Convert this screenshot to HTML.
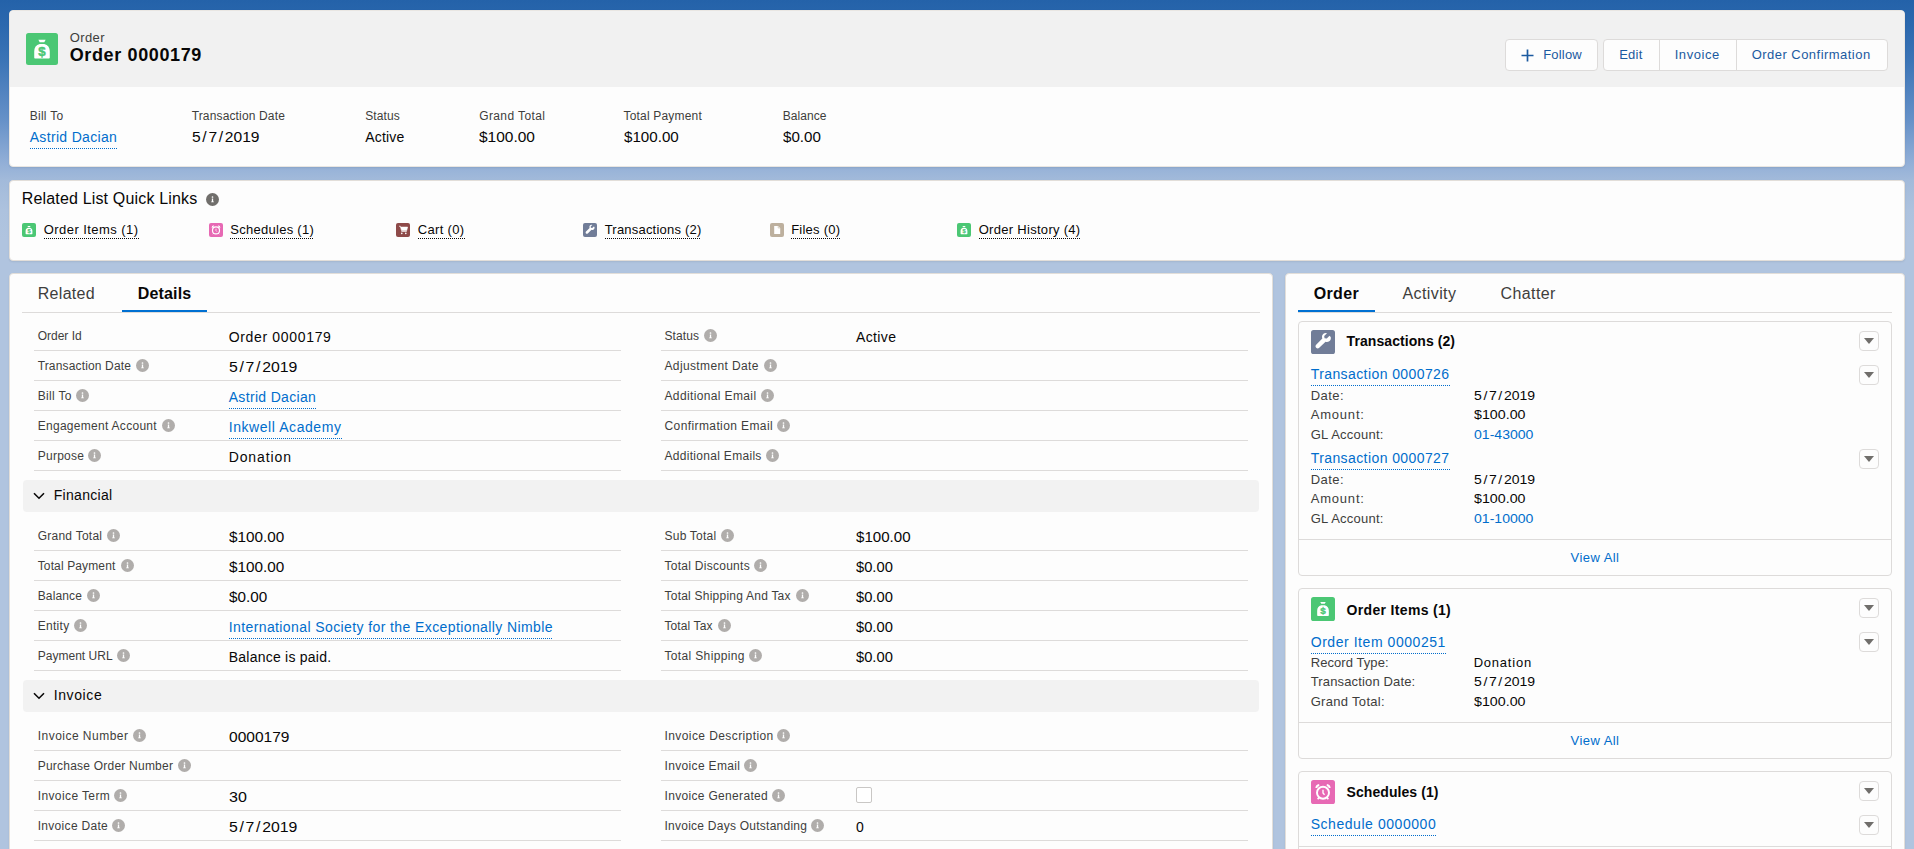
<!DOCTYPE html><html><head><meta charset="utf-8"><style>
*{box-sizing:border-box;margin:0;padding:0}
html,body{width:1914px;height:849px;overflow:hidden}
body{position:relative;background:#b0c4df linear-gradient(to bottom,#2462a9 0px,#2b68ae 25px,#3b74b6 60px,#6691c8 120px,#92afd7 163px,#a2bada 180px,#adc2de 210px,#b0c4df 240px) no-repeat;background-size:1914px 260px;font-family:"Liberation Sans", sans-serif;}
.t{position:absolute;white-space:nowrap;line-height:20px}
.r{position:absolute}
.sl{margin:0 1.5px}
.card{position:absolute;background:#fdfdfd;border:1px solid #e2ded9;border-radius:4px;box-shadow:0 1px 2px rgba(0,0,0,.08);}
.lk{padding-bottom:2px;background-image:linear-gradient(to right,currentColor 50%,transparent 50%);background-size:2px 1px;background-repeat:repeat-x;background-position:0 100%}
.lkq{background-image:linear-gradient(to right,#080707 50%,transparent 50%);background-size:2px 1px;background-repeat:repeat-x;background-position:0 18px}
.btn{position:absolute;border:1px solid #dddbda;border-radius:4px;background:#fdfdfd;}
.dd{position:absolute;width:20px;height:20px;border:1px solid #dddbda;border-radius:4px;background:#fdfdfd}
.dd:after{content:"";position:absolute;left:4px;top:6px;border-left:5px solid transparent;border-right:5px solid transparent;border-top:6px solid #706e6b}
</style></head><body>
<div class="card" style="left:9px;top:10px;width:1896px;height:157px;overflow:hidden;border-color:#e9e6e2"><div style="position:absolute;left:0;top:0;width:100%;height:76px;background:#f1f1f1"></div></div>
<svg class="r" style="left:26px;top:33px" width="32" height="32" viewBox="0 0 14 14"><rect width="14" height="14" rx="1.1" fill="#4bc774"/>
<path d="M5.4 2.9h3.2l-0.6 1.1H6z M6 4.85h2C9.6 5.3 10.4 6.4 10.4 8V10.7c0 .25-.2 .45-.45 .45H4.05c-.25 0-.45-.2-.45-.45V8C3.6 6.4 4.4 5.3 6 4.85z" fill="#fff"/><text x="7" y="10.15" font-family="Liberation Sans" font-weight="700" font-size="5.8" fill="#4bc774" stroke="#4bc774" stroke-width="0.2" text-anchor="middle">$</text></svg>
<div id="t1" class="t " style="left:69.70px;top:27.5px;font-size:13px;color:#3e3e3c;letter-spacing:0.400px;">Order</div>
<div id="t2" class="t " style="left:69.70px;top:45.0px;font-size:18px;color:#080707;font-weight:700;letter-spacing:0.633px;">Order 0000179</div>
<div class="btn" style="left:1505px;top:39px;width:93px;height:32px;"></div>
<svg class="r" style="left:1521px;top:49px" width="13" height="13" viewBox="0 0 13 13"><path d="M6.5 0.5v12M0.5 6.5h12" stroke="#1b5aa0" stroke-width="1.7"/></svg>
<div id="t3" class="t " style="left:1543.20px;top:44.5px;font-size:13px;color:#1b5aa0;letter-spacing:0.200px;">Follow</div>
<div class="btn" style="left:1603px;top:39px;width:285px;height:32px;"></div>
<div class="r" style="left:1659px;top:40px;width:1px;height:30px;background:#dddbda"></div>
<div class="r" style="left:1736px;top:40px;width:1px;height:30px;background:#dddbda"></div>
<div id="t4" class="t " style="left:1619.20px;top:44.5px;font-size:13px;color:#1b5aa0;letter-spacing:0.233px;">Edit</div>
<div id="t5" class="t " style="left:1674.70px;top:44.5px;font-size:13px;color:#1b5aa0;letter-spacing:0.550px;">Invoice</div>
<div id="t6" class="t " style="left:1751.70px;top:44.5px;font-size:13px;color:#1b5aa0;letter-spacing:0.465px;">Order Confirmation</div>
<div id="t7" class="t " style="left:29.70px;top:106.0px;font-size:12px;color:#3e3e3c;letter-spacing:0.283px;">Bill To</div>
<div id="t8" class="t lk" style="left:29.70px;top:127.0px;font-size:14px;color:#006dcc;letter-spacing:0.325px;">Astrid Dacian</div>
<div id="t9" class="t " style="left:191.70px;top:106.0px;font-size:12px;color:#3e3e3c;letter-spacing:0.147px;">Transaction Date</div>
<div id="t10" class="t " style="left:191.70px;top:127.0px;font-size:14px;color:#080707;transform:scaleX(1.1153);transform-origin:0 0;">5<span class="sl">/</span>7<span class="sl">/</span>2019</div>
<div id="t11" class="t " style="left:365.20px;top:106.0px;font-size:12px;color:#3e3e3c;letter-spacing:0.120px;">Status</div>
<div id="t12" class="t " style="left:365.20px;top:127.0px;font-size:14px;color:#080707;letter-spacing:0.200px;">Active</div>
<div id="t13" class="t " style="left:479.20px;top:106.0px;font-size:12px;color:#3e3e3c;letter-spacing:0.390px;">Grand Total</div>
<div id="t14" class="t " style="left:479.20px;top:127.0px;font-size:14px;color:#080707;transform:scaleX(1.1061);transform-origin:0 0;">$100.00</div>
<div id="t15" class="t " style="left:623.50px;top:106.0px;font-size:12px;color:#3e3e3c;letter-spacing:0.183px;">Total Payment</div>
<div id="t16" class="t " style="left:623.50px;top:127.0px;font-size:14px;color:#080707;transform:scaleX(1.0820);transform-origin:0 0;">$100.00</div>
<div id="t17" class="t " style="left:782.70px;top:106.0px;font-size:12px;color:#3e3e3c;letter-spacing:0.067px;">Balance</div>
<div id="t18" class="t " style="left:782.70px;top:127.0px;font-size:14px;color:#080707;transform:scaleX(1.0824);transform-origin:0 0;">$0.00</div>
<div class="card" style="left:9px;top:180px;width:1896px;height:81px;"></div>
<div id="t19" class="t " style="left:21.70px;top:188.5px;font-size:16px;color:#080707;letter-spacing:0.170px;">Related List Quick Links</div>
<svg class="r" style="left:206px;top:193px" width="13" height="13" viewBox="0 0 13 13"><circle cx="6.5" cy="6.5" r="6.5" fill="#706e6b"/><circle cx="6.5" cy="4" r="0.85" fill="#fff"/><path d="M5.85 5.4h1.3v3.1h0.7v0.75H5.15v-0.75h0.7z" fill="#fff"/></svg>
<svg class="r" style="left:22px;top:223px" width="14" height="14" viewBox="0 0 14 14"><rect width="14" height="14" rx="2" fill="#4bc774"/>
<path d="M5.4 2.9h3.2l-0.6 1.1H6z M6 4.85h2C9.6 5.3 10.4 6.4 10.4 8V10.7c0 .25-.2 .45-.45 .45H4.05c-.25 0-.45-.2-.45-.45V8C3.6 6.4 4.4 5.3 6 4.85z" fill="#fff"/><text x="7" y="10.15" font-family="Liberation Sans" font-weight="700" font-size="5.8" fill="#4bc774" stroke="#4bc774" stroke-width="0.2" text-anchor="middle">$</text>
</svg>
<div id="t20" class="t lkq" style="left:43.70px;top:219.5px;font-size:13px;color:#080707;letter-spacing:0.450px;">Order Items (1)</div>
<svg class="r" style="left:209px;top:223px" width="14" height="14" viewBox="0 0 14 14"><rect width="14" height="14" rx="2" fill="#e769b4"/>
<circle cx="7" cy="7.4" r="3.5" fill="none" stroke="#fff" stroke-width="1.15"/><path d="M7 5.7v1.9l0.9 1" stroke="#fff" stroke-width="0.8" fill="none"/><path d="M3.1 4.7Q3.2 3.1 4.8 2.9M10.9 4.7Q10.8 3.1 9.2 2.9" stroke="#fff" stroke-width="1.1" fill="none"/><path d="M4.7 10.2L3.9 11.2M9.3 10.2L10.1 11.2" stroke="#fff" stroke-width="1"/>
</svg>
<div id="t21" class="t lkq" style="left:230.20px;top:219.5px;font-size:13px;color:#080707;letter-spacing:0.283px;">Schedules (1)</div>
<svg class="r" style="left:396px;top:223px" width="14" height="14" viewBox="0 0 14 14"><rect width="14" height="14" rx="2" fill="#8e4a49"/>
<path d="M3 3.2h1.3l1.2 4.4h5.2l0.9-3.5H4.6" fill="#fff" stroke="#fff" stroke-width="0.6"/><path d="M5.4 8.5h5.4" stroke="#fff" stroke-width="0.7"/><circle cx="5.8" cy="10.4" r="0.8" fill="#fff"/><circle cx="9.8" cy="10.4" r="0.8" fill="#fff"/>
</svg>
<div id="t22" class="t lkq" style="left:417.70px;top:219.5px;font-size:13px;color:#080707;letter-spacing:0.343px;">Cart (0)</div>
<svg class="r" style="left:583px;top:223px" width="14" height="14" viewBox="0 0 14 14"><rect width="14" height="14" rx="2" fill="#717d98"/>
<path d="M10.8 3.4l-1.6 1.6-1.3-0.2-0.2-1.3 1.6-1.6c-1.4-0.4-2.9 0.6-2.9 2.1 0 0.3 0.1 0.6 0.2 0.9L3 8.6c-0.5 0.5-0.5 1.3 0 1.8s1.3 0.5 1.8 0l3.7-3.6c0.3 0.1 0.6 0.2 0.9 0.2 1.5 0 2.5-1.5 2.1-2.9z" fill="#fff"/>
</svg>
<div id="t23" class="t lkq" style="left:604.70px;top:219.5px;font-size:13px;color:#080707;letter-spacing:0.207px;">Transactions (2)</div>
<svg class="r" style="left:770px;top:223px" width="14" height="14" viewBox="0 0 14 14"><rect width="14" height="14" rx="2" fill="#bdb09e"/>
<path d="M4.2 3h4l2 2v6h-6z" fill="#fff"/><path d="M8.2 3v2h2" fill="none" stroke="#baac93" stroke-width="0.5"/>
</svg>
<div id="t24" class="t lkq" style="left:791.20px;top:219.5px;font-size:13px;color:#080707;letter-spacing:0.237px;">Files (0)</div>
<svg class="r" style="left:957px;top:223px" width="14" height="14" viewBox="0 0 14 14"><rect width="14" height="14" rx="2" fill="#4bc774"/>
<path d="M5.4 2.9h3.2l-0.6 1.1H6z M6 4.85h2C9.6 5.3 10.4 6.4 10.4 8V10.7c0 .25-.2 .45-.45 .45H4.05c-.25 0-.45-.2-.45-.45V8C3.6 6.4 4.4 5.3 6 4.85z" fill="#fff"/><text x="7" y="10.15" font-family="Liberation Sans" font-weight="700" font-size="5.8" fill="#4bc774" stroke="#4bc774" stroke-width="0.2" text-anchor="middle">$</text>
</svg>
<div id="t25" class="t lkq" style="left:978.70px;top:219.5px;font-size:13px;color:#080707;letter-spacing:0.294px;">Order History (4)</div>
<div class="card" style="left:9px;top:273px;width:1264px;height:600px;"></div>
<div id="t26" class="t " style="left:37.70px;top:283.5px;font-size:16px;color:#3e3e3c;letter-spacing:0.317px;">Related</div>
<div id="t27" class="t " style="left:137.70px;top:283.5px;font-size:16px;color:#080707;font-weight:700;letter-spacing:0.167px;">Details</div>
<div class="r" style="left:22px;top:312px;width:1238px;height:1px;background:#dddbda"></div>
<div class="r" style="left:122px;top:310px;width:85px;height:2px;background:#0070d2"></div>
<div id="t28" class="t " style="left:37.70px;top:326.0px;font-size:12px;color:#3e3e3c;">Order Id</div>
<div id="t29" class="t " style="left:228.70px;top:327.0px;font-size:14px;color:#080707;letter-spacing:0.667px;">Order 0000179</div>
<div class="r" style="left:34px;top:350px;width:587px;height:1px;background:#dddbda"></div>
<div id="t30" class="t " style="left:664.50px;top:326.0px;font-size:12px;color:#3e3e3c;letter-spacing:0.080px;">Status</div>
<svg class="r" style="left:703.9px;top:329px" width="13" height="13" viewBox="0 0 13 13"><circle cx="6.5" cy="6.5" r="6.5" fill="#b0adab"/><circle cx="6.5" cy="4" r="0.85" fill="#fff"/><path d="M5.85 5.4h1.3v3.1h0.7v0.75H5.15v-0.75h0.7z" fill="#fff"/></svg>
<div id="t31" class="t " style="left:855.90px;top:327.0px;font-size:14px;color:#080707;letter-spacing:0.400px;">Active</div>
<div class="r" style="left:661px;top:350px;width:587px;height:1px;background:#dddbda"></div>
<div id="t32" class="t " style="left:37.70px;top:356.0px;font-size:12px;color:#3e3e3c;letter-spacing:0.153px;">Transaction Date</div>
<svg class="r" style="left:136px;top:359px" width="13" height="13" viewBox="0 0 13 13"><circle cx="6.5" cy="6.5" r="6.5" fill="#b0adab"/><circle cx="6.5" cy="4" r="0.85" fill="#fff"/><path d="M5.85 5.4h1.3v3.1h0.7v0.75H5.15v-0.75h0.7z" fill="#fff"/></svg>
<div id="t33" class="t " style="left:228.70px;top:357.0px;font-size:14px;color:#080707;transform:scaleX(1.1305);transform-origin:0 0;">5<span class="sl">/</span>7<span class="sl">/</span>2019</div>
<div class="r" style="left:34px;top:380px;width:587px;height:1px;background:#dddbda"></div>
<div id="t34" class="t " style="left:664.50px;top:356.0px;font-size:12px;color:#3e3e3c;letter-spacing:0.371px;">Adjustment Date</div>
<svg class="r" style="left:763.7px;top:359px" width="13" height="13" viewBox="0 0 13 13"><circle cx="6.5" cy="6.5" r="6.5" fill="#b0adab"/><circle cx="6.5" cy="4" r="0.85" fill="#fff"/><path d="M5.85 5.4h1.3v3.1h0.7v0.75H5.15v-0.75h0.7z" fill="#fff"/></svg>
<div class="r" style="left:661px;top:380px;width:587px;height:1px;background:#dddbda"></div>
<div id="t35" class="t " style="left:37.70px;top:386.0px;font-size:12px;color:#3e3e3c;letter-spacing:0.317px;">Bill To</div>
<svg class="r" style="left:75.6px;top:389px" width="13" height="13" viewBox="0 0 13 13"><circle cx="6.5" cy="6.5" r="6.5" fill="#b0adab"/><circle cx="6.5" cy="4" r="0.85" fill="#fff"/><path d="M5.85 5.4h1.3v3.1h0.7v0.75H5.15v-0.75h0.7z" fill="#fff"/></svg>
<div id="t36" class="t lk" style="left:228.70px;top:387.0px;font-size:14px;color:#006dcc;letter-spacing:0.325px;">Astrid Dacian</div>
<div class="r" style="left:34px;top:410px;width:587px;height:1px;background:#dddbda"></div>
<div id="t37" class="t " style="left:664.50px;top:386.0px;font-size:12px;color:#3e3e3c;letter-spacing:0.367px;">Additional Email</div>
<svg class="r" style="left:761px;top:389px" width="13" height="13" viewBox="0 0 13 13"><circle cx="6.5" cy="6.5" r="6.5" fill="#b0adab"/><circle cx="6.5" cy="4" r="0.85" fill="#fff"/><path d="M5.85 5.4h1.3v3.1h0.7v0.75H5.15v-0.75h0.7z" fill="#fff"/></svg>
<div class="r" style="left:661px;top:410px;width:587px;height:1px;background:#dddbda"></div>
<div id="t38" class="t " style="left:37.70px;top:416.0px;font-size:12px;color:#3e3e3c;letter-spacing:0.288px;">Engagement Account</div>
<svg class="r" style="left:161.6px;top:419px" width="13" height="13" viewBox="0 0 13 13"><circle cx="6.5" cy="6.5" r="6.5" fill="#b0adab"/><circle cx="6.5" cy="4" r="0.85" fill="#fff"/><path d="M5.85 5.4h1.3v3.1h0.7v0.75H5.15v-0.75h0.7z" fill="#fff"/></svg>
<div id="t39" class="t lk" style="left:228.70px;top:417.0px;font-size:14px;color:#006dcc;letter-spacing:0.571px;">Inkwell Academy</div>
<div class="r" style="left:34px;top:440px;width:587px;height:1px;background:#dddbda"></div>
<div id="t40" class="t " style="left:664.50px;top:416.0px;font-size:12px;color:#3e3e3c;letter-spacing:0.400px;">Confirmation Email</div>
<svg class="r" style="left:777.3px;top:419px" width="13" height="13" viewBox="0 0 13 13"><circle cx="6.5" cy="6.5" r="6.5" fill="#b0adab"/><circle cx="6.5" cy="4" r="0.85" fill="#fff"/><path d="M5.85 5.4h1.3v3.1h0.7v0.75H5.15v-0.75h0.7z" fill="#fff"/></svg>
<div class="r" style="left:661px;top:440px;width:587px;height:1px;background:#dddbda"></div>
<div id="t41" class="t " style="left:37.70px;top:446.0px;font-size:12px;color:#3e3e3c;letter-spacing:0.267px;">Purpose</div>
<svg class="r" style="left:88.3px;top:449px" width="13" height="13" viewBox="0 0 13 13"><circle cx="6.5" cy="6.5" r="6.5" fill="#b0adab"/><circle cx="6.5" cy="4" r="0.85" fill="#fff"/><path d="M5.85 5.4h1.3v3.1h0.7v0.75H5.15v-0.75h0.7z" fill="#fff"/></svg>
<div id="t42" class="t " style="left:228.70px;top:447.0px;font-size:14px;color:#080707;letter-spacing:0.886px;">Donation</div>
<div class="r" style="left:34px;top:470px;width:587px;height:1px;background:#dddbda"></div>
<div id="t43" class="t " style="left:664.50px;top:446.0px;font-size:12px;color:#3e3e3c;letter-spacing:0.300px;">Additional Emails</div>
<svg class="r" style="left:766.3px;top:449px" width="13" height="13" viewBox="0 0 13 13"><circle cx="6.5" cy="6.5" r="6.5" fill="#b0adab"/><circle cx="6.5" cy="4" r="0.85" fill="#fff"/><path d="M5.85 5.4h1.3v3.1h0.7v0.75H5.15v-0.75h0.7z" fill="#fff"/></svg>
<div class="r" style="left:661px;top:470px;width:587px;height:1px;background:#dddbda"></div>
<div class="r" style="left:23px;top:480px;width:1236px;height:32px;background:#f2f2f2;border-radius:4px"></div>
<svg class="r" style="left:33px;top:492px" width="12" height="8" viewBox="0 0 12 8"><path d="M1 1.2l5 5 5-5" stroke="#080707" stroke-width="1.6" fill="none"/></svg>
<div id="t44" class="t " style="left:53.70px;top:485.0px;font-size:14px;color:#080707;letter-spacing:0.312px;">Financial</div>
<div id="t45" class="t " style="left:37.70px;top:526.0px;font-size:12px;color:#3e3e3c;letter-spacing:0.250px;">Grand Total</div>
<svg class="r" style="left:107.2px;top:529px" width="13" height="13" viewBox="0 0 13 13"><circle cx="6.5" cy="6.5" r="6.5" fill="#b0adab"/><circle cx="6.5" cy="4" r="0.85" fill="#fff"/><path d="M5.85 5.4h1.3v3.1h0.7v0.75H5.15v-0.75h0.7z" fill="#fff"/></svg>
<div id="t46" class="t " style="left:228.70px;top:527.0px;font-size:14px;color:#080707;transform:scaleX(1.0940);transform-origin:0 0;">$100.00</div>
<div class="r" style="left:34px;top:550px;width:587px;height:1px;background:#dddbda"></div>
<div id="t47" class="t " style="left:664.50px;top:526.0px;font-size:12px;color:#3e3e3c;letter-spacing:0.225px;">Sub Total</div>
<svg class="r" style="left:721.3px;top:529px" width="13" height="13" viewBox="0 0 13 13"><circle cx="6.5" cy="6.5" r="6.5" fill="#b0adab"/><circle cx="6.5" cy="4" r="0.85" fill="#fff"/><path d="M5.85 5.4h1.3v3.1h0.7v0.75H5.15v-0.75h0.7z" fill="#fff"/></svg>
<div id="t48" class="t " style="left:855.90px;top:527.0px;font-size:14px;color:#080707;transform:scaleX(1.0780);transform-origin:0 0;">$100.00</div>
<div class="r" style="left:661px;top:550px;width:587px;height:1px;background:#dddbda"></div>
<div id="t49" class="t " style="left:37.70px;top:556.0px;font-size:12px;color:#3e3e3c;letter-spacing:0.133px;">Total Payment</div>
<svg class="r" style="left:121.3px;top:559px" width="13" height="13" viewBox="0 0 13 13"><circle cx="6.5" cy="6.5" r="6.5" fill="#b0adab"/><circle cx="6.5" cy="4" r="0.85" fill="#fff"/><path d="M5.85 5.4h1.3v3.1h0.7v0.75H5.15v-0.75h0.7z" fill="#fff"/></svg>
<div id="t50" class="t " style="left:228.70px;top:557.0px;font-size:14px;color:#080707;transform:scaleX(1.0940);transform-origin:0 0;">$100.00</div>
<div class="r" style="left:34px;top:580px;width:587px;height:1px;background:#dddbda"></div>
<div id="t51" class="t " style="left:664.50px;top:556.0px;font-size:12px;color:#3e3e3c;letter-spacing:0.271px;">Total Discounts</div>
<svg class="r" style="left:754.3px;top:559px" width="13" height="13" viewBox="0 0 13 13"><circle cx="6.5" cy="6.5" r="6.5" fill="#b0adab"/><circle cx="6.5" cy="4" r="0.85" fill="#fff"/><path d="M5.85 5.4h1.3v3.1h0.7v0.75H5.15v-0.75h0.7z" fill="#fff"/></svg>
<div id="t52" class="t " style="left:855.90px;top:557.0px;font-size:14px;color:#080707;transform:scaleX(1.0514);transform-origin:0 0;">$0.00</div>
<div class="r" style="left:661px;top:580px;width:587px;height:1px;background:#dddbda"></div>
<div id="t53" class="t " style="left:37.70px;top:586.0px;font-size:12px;color:#3e3e3c;letter-spacing:0.133px;">Balance</div>
<svg class="r" style="left:86.5px;top:589px" width="13" height="13" viewBox="0 0 13 13"><circle cx="6.5" cy="6.5" r="6.5" fill="#b0adab"/><circle cx="6.5" cy="4" r="0.85" fill="#fff"/><path d="M5.85 5.4h1.3v3.1h0.7v0.75H5.15v-0.75h0.7z" fill="#fff"/></svg>
<div id="t54" class="t " style="left:228.70px;top:587.0px;font-size:14px;color:#080707;transform:scaleX(1.0912);transform-origin:0 0;">$0.00</div>
<div class="r" style="left:34px;top:610px;width:587px;height:1px;background:#dddbda"></div>
<div id="t55" class="t " style="left:664.50px;top:586.0px;font-size:12px;color:#3e3e3c;letter-spacing:0.229px;">Total Shipping And Tax</div>
<svg class="r" style="left:796.3px;top:589px" width="13" height="13" viewBox="0 0 13 13"><circle cx="6.5" cy="6.5" r="6.5" fill="#b0adab"/><circle cx="6.5" cy="4" r="0.85" fill="#fff"/><path d="M5.85 5.4h1.3v3.1h0.7v0.75H5.15v-0.75h0.7z" fill="#fff"/></svg>
<div id="t56" class="t " style="left:855.90px;top:587.0px;font-size:14px;color:#080707;transform:scaleX(1.0514);transform-origin:0 0;">$0.00</div>
<div class="r" style="left:661px;top:610px;width:587px;height:1px;background:#dddbda"></div>
<div id="t57" class="t " style="left:37.70px;top:616.0px;font-size:12px;color:#3e3e3c;letter-spacing:0.300px;">Entity</div>
<svg class="r" style="left:74.2px;top:619px" width="13" height="13" viewBox="0 0 13 13"><circle cx="6.5" cy="6.5" r="6.5" fill="#b0adab"/><circle cx="6.5" cy="4" r="0.85" fill="#fff"/><path d="M5.85 5.4h1.3v3.1h0.7v0.75H5.15v-0.75h0.7z" fill="#fff"/></svg>
<div id="t58" class="t lk" style="left:228.70px;top:617.0px;font-size:14px;color:#006dcc;letter-spacing:0.400px;">International Society for the Exceptionally Nimble</div>
<div class="r" style="left:34px;top:640px;width:587px;height:1px;background:#dddbda"></div>
<div id="t59" class="t " style="left:664.50px;top:616.0px;font-size:12px;color:#3e3e3c;letter-spacing:0.100px;">Total Tax</div>
<svg class="r" style="left:718.3px;top:619px" width="13" height="13" viewBox="0 0 13 13"><circle cx="6.5" cy="6.5" r="6.5" fill="#b0adab"/><circle cx="6.5" cy="4" r="0.85" fill="#fff"/><path d="M5.85 5.4h1.3v3.1h0.7v0.75H5.15v-0.75h0.7z" fill="#fff"/></svg>
<div id="t60" class="t " style="left:855.90px;top:617.0px;font-size:14px;color:#080707;transform:scaleX(1.0514);transform-origin:0 0;">$0.00</div>
<div class="r" style="left:661px;top:640px;width:587px;height:1px;background:#dddbda"></div>
<div id="t61" class="t " style="left:37.70px;top:646.0px;font-size:12px;color:#3e3e3c;letter-spacing:0.020px;">Payment URL</div>
<svg class="r" style="left:116.9px;top:649px" width="13" height="13" viewBox="0 0 13 13"><circle cx="6.5" cy="6.5" r="6.5" fill="#b0adab"/><circle cx="6.5" cy="4" r="0.85" fill="#fff"/><path d="M5.85 5.4h1.3v3.1h0.7v0.75H5.15v-0.75h0.7z" fill="#fff"/></svg>
<div id="t62" class="t " style="left:228.70px;top:647.0px;font-size:14px;color:#080707;letter-spacing:0.240px;">Balance is paid.</div>
<div class="r" style="left:34px;top:670px;width:587px;height:1px;background:#dddbda"></div>
<div id="t63" class="t " style="left:664.50px;top:646.0px;font-size:12px;color:#3e3e3c;letter-spacing:0.346px;">Total Shipping</div>
<svg class="r" style="left:749px;top:649px" width="13" height="13" viewBox="0 0 13 13"><circle cx="6.5" cy="6.5" r="6.5" fill="#b0adab"/><circle cx="6.5" cy="4" r="0.85" fill="#fff"/><path d="M5.85 5.4h1.3v3.1h0.7v0.75H5.15v-0.75h0.7z" fill="#fff"/></svg>
<div id="t64" class="t " style="left:855.90px;top:647.0px;font-size:14px;color:#080707;transform:scaleX(1.0514);transform-origin:0 0;">$0.00</div>
<div class="r" style="left:661px;top:670px;width:587px;height:1px;background:#dddbda"></div>
<div class="r" style="left:23px;top:680px;width:1236px;height:32px;background:#f2f2f2;border-radius:4px"></div>
<svg class="r" style="left:33px;top:692px" width="12" height="8" viewBox="0 0 12 8"><path d="M1 1.2l5 5 5-5" stroke="#080707" stroke-width="1.6" fill="none"/></svg>
<div id="t65" class="t " style="left:53.70px;top:685.0px;font-size:14px;color:#080707;letter-spacing:0.617px;">Invoice</div>
<div id="t66" class="t " style="left:37.70px;top:726.0px;font-size:12px;color:#3e3e3c;letter-spacing:0.477px;">Invoice Number</div>
<svg class="r" style="left:132.9px;top:729px" width="13" height="13" viewBox="0 0 13 13"><circle cx="6.5" cy="6.5" r="6.5" fill="#b0adab"/><circle cx="6.5" cy="4" r="0.85" fill="#fff"/><path d="M5.85 5.4h1.3v3.1h0.7v0.75H5.15v-0.75h0.7z" fill="#fff"/></svg>
<div id="t67" class="t " style="left:228.70px;top:727.0px;font-size:14px;color:#080707;transform:scaleX(1.1093);transform-origin:0 0;">0000179</div>
<div class="r" style="left:34px;top:750px;width:587px;height:1px;background:#dddbda"></div>
<div id="t68" class="t " style="left:664.50px;top:726.0px;font-size:12px;color:#3e3e3c;letter-spacing:0.411px;">Invoice Description</div>
<svg class="r" style="left:776.9px;top:729px" width="13" height="13" viewBox="0 0 13 13"><circle cx="6.5" cy="6.5" r="6.5" fill="#b0adab"/><circle cx="6.5" cy="4" r="0.85" fill="#fff"/><path d="M5.85 5.4h1.3v3.1h0.7v0.75H5.15v-0.75h0.7z" fill="#fff"/></svg>
<div class="r" style="left:661px;top:750px;width:587px;height:1px;background:#dddbda"></div>
<div id="t69" class="t " style="left:37.70px;top:756.0px;font-size:12px;color:#3e3e3c;letter-spacing:0.225px;">Purchase Order Number</div>
<svg class="r" style="left:178.2px;top:759px" width="13" height="13" viewBox="0 0 13 13"><circle cx="6.5" cy="6.5" r="6.5" fill="#b0adab"/><circle cx="6.5" cy="4" r="0.85" fill="#fff"/><path d="M5.85 5.4h1.3v3.1h0.7v0.75H5.15v-0.75h0.7z" fill="#fff"/></svg>
<div class="r" style="left:34px;top:780px;width:587px;height:1px;background:#dddbda"></div>
<div id="t70" class="t " style="left:664.50px;top:756.0px;font-size:12px;color:#3e3e3c;letter-spacing:0.342px;">Invoice Email</div>
<svg class="r" style="left:743.6px;top:759px" width="13" height="13" viewBox="0 0 13 13"><circle cx="6.5" cy="6.5" r="6.5" fill="#b0adab"/><circle cx="6.5" cy="4" r="0.85" fill="#fff"/><path d="M5.85 5.4h1.3v3.1h0.7v0.75H5.15v-0.75h0.7z" fill="#fff"/></svg>
<div class="r" style="left:661px;top:780px;width:587px;height:1px;background:#dddbda"></div>
<div id="t71" class="t " style="left:37.70px;top:786.0px;font-size:12px;color:#3e3e3c;letter-spacing:0.391px;">Invoice Term</div>
<svg class="r" style="left:114px;top:789px" width="13" height="13" viewBox="0 0 13 13"><circle cx="6.5" cy="6.5" r="6.5" fill="#b0adab"/><circle cx="6.5" cy="4" r="0.85" fill="#fff"/><path d="M5.85 5.4h1.3v3.1h0.7v0.75H5.15v-0.75h0.7z" fill="#fff"/></svg>
<div id="t72" class="t " style="left:228.70px;top:787.0px;font-size:14px;color:#080707;transform:scaleX(1.1467);transform-origin:0 0;">30</div>
<div class="r" style="left:34px;top:810px;width:587px;height:1px;background:#dddbda"></div>
<div id="t73" class="t " style="left:664.50px;top:786.0px;font-size:12px;color:#3e3e3c;letter-spacing:0.325px;">Invoice Generated</div>
<svg class="r" style="left:771.7px;top:789px" width="13" height="13" viewBox="0 0 13 13"><circle cx="6.5" cy="6.5" r="6.5" fill="#b0adab"/><circle cx="6.5" cy="4" r="0.85" fill="#fff"/><path d="M5.85 5.4h1.3v3.1h0.7v0.75H5.15v-0.75h0.7z" fill="#fff"/></svg>
<div class="r" style="left:856px;top:787px;width:16px;height:16px;border:1px solid #c9c7c5;border-radius:2px;background:#fff"></div>
<div class="r" style="left:661px;top:810px;width:587px;height:1px;background:#dddbda"></div>
<div id="t74" class="t " style="left:37.70px;top:816.0px;font-size:12px;color:#3e3e3c;letter-spacing:0.309px;">Invoice Date</div>
<svg class="r" style="left:112.1px;top:819px" width="13" height="13" viewBox="0 0 13 13"><circle cx="6.5" cy="6.5" r="6.5" fill="#b0adab"/><circle cx="6.5" cy="4" r="0.85" fill="#fff"/><path d="M5.85 5.4h1.3v3.1h0.7v0.75H5.15v-0.75h0.7z" fill="#fff"/></svg>
<div id="t75" class="t " style="left:228.70px;top:817.0px;font-size:14px;color:#080707;transform:scaleX(1.1305);transform-origin:0 0;">5<span class="sl">/</span>7<span class="sl">/</span>2019</div>
<div class="r" style="left:34px;top:840px;width:587px;height:1px;background:#dddbda"></div>
<div id="t76" class="t " style="left:664.50px;top:816.0px;font-size:12px;color:#3e3e3c;letter-spacing:0.248px;">Invoice Days Outstanding</div>
<svg class="r" style="left:811.2px;top:819px" width="13" height="13" viewBox="0 0 13 13"><circle cx="6.5" cy="6.5" r="6.5" fill="#b0adab"/><circle cx="6.5" cy="4" r="0.85" fill="#fff"/><path d="M5.85 5.4h1.3v3.1h0.7v0.75H5.15v-0.75h0.7z" fill="#fff"/></svg>
<div id="t77" class="t " style="left:855.90px;top:817.0px;font-size:14px;color:#080707;">0</div>
<div class="r" style="left:661px;top:840px;width:587px;height:1px;background:#dddbda"></div>
<div class="card" style="left:1285px;top:273px;width:620px;height:600px;"></div>
<div id="t78" class="t " style="left:1313.70px;top:283.5px;font-size:16px;color:#080707;font-weight:700;letter-spacing:0.350px;">Order</div>
<div id="t79" class="t " style="left:1402.40px;top:283.5px;font-size:16px;color:#3e3e3c;letter-spacing:0.414px;">Activity</div>
<div id="t80" class="t " style="left:1500.50px;top:283.5px;font-size:16px;color:#3e3e3c;letter-spacing:0.400px;">Chatter</div>
<div class="r" style="left:1298px;top:312px;width:594px;height:1px;background:#dddbda"></div>
<div class="r" style="left:1298px;top:310px;width:77px;height:2px;background:#0070d2"></div>
<div class="r" style="left:1298px;top:321px;width:594px;height:255px;border:1px solid #dddbda;border-radius:4px"></div>
<svg class="r" style="left:1311px;top:330px" width="24" height="24" viewBox="0 0 14 14"><rect width="14" height="14" rx="1.5" fill="#717d98"/>
<path d="M10.8 3.4l-1.6 1.6-1.3-0.2-0.2-1.3 1.6-1.6c-1.4-0.4-2.9 0.6-2.9 2.1 0 0.3 0.1 0.6 0.2 0.9L3 8.6c-0.5 0.5-0.5 1.3 0 1.8s1.3 0.5 1.8 0l3.7-3.6c0.3 0.1 0.6 0.2 0.9 0.2 1.5 0 2.5-1.5 2.1-2.9z" fill="#fff"/>
</svg>
<div id="t81" class="t " style="left:1346.60px;top:331.0px;font-size:14px;color:#080707;font-weight:700;letter-spacing:0.067px;">Transactions (2)</div>
<div class="dd" style="left:1859px;top:331px"></div>
<div id="t82" class="t lk" style="left:1310.70px;top:364.0px;font-size:14px;color:#006dcc;letter-spacing:0.411px;">Transaction 0000726</div>
<div class="dd" style="left:1859px;top:365px"></div>
<div id="t83" class="t " style="left:1310.70px;top:385.5px;font-size:13px;color:#3e3e3c;letter-spacing:0.450px;">Date:</div>
<div id="t84" class="t " style="left:1473.70px;top:385.5px;font-size:13px;color:#080707;transform:scaleX(1.0786);transform-origin:0 0;">5<span class="sl">/</span>7<span class="sl">/</span>2019</div>
<div id="t85" class="t " style="left:1310.70px;top:405.0px;font-size:13px;color:#3e3e3c;letter-spacing:0.800px;">Amount:</div>
<div id="t86" class="t " style="left:1473.70px;top:405.0px;font-size:13px;color:#080707;transform:scaleX(1.0957);transform-origin:0 0;">$100.00</div>
<div id="t87" class="t " style="left:1310.70px;top:424.5px;font-size:13px;color:#3e3e3c;letter-spacing:0.240px;">GL Account:</div>
<div id="t88" class="t " style="left:1473.70px;top:424.5px;font-size:13px;color:#006dcc;transform:scaleX(1.0815);transform-origin:0 0;">01-43000</div>
<div id="t89" class="t lk" style="left:1310.70px;top:448.0px;font-size:14px;color:#006dcc;letter-spacing:0.411px;">Transaction 0000727</div>
<div class="dd" style="left:1859px;top:449px"></div>
<div id="t90" class="t " style="left:1310.70px;top:469.5px;font-size:13px;color:#3e3e3c;letter-spacing:0.450px;">Date:</div>
<div id="t91" class="t " style="left:1473.70px;top:469.5px;font-size:13px;color:#080707;transform:scaleX(1.0786);transform-origin:0 0;">5<span class="sl">/</span>7<span class="sl">/</span>2019</div>
<div id="t92" class="t " style="left:1310.70px;top:489.0px;font-size:13px;color:#3e3e3c;letter-spacing:0.800px;">Amount:</div>
<div id="t93" class="t " style="left:1473.70px;top:489.0px;font-size:13px;color:#080707;transform:scaleX(1.0957);transform-origin:0 0;">$100.00</div>
<div id="t94" class="t " style="left:1310.70px;top:508.5px;font-size:13px;color:#3e3e3c;letter-spacing:0.240px;">GL Account:</div>
<div id="t95" class="t " style="left:1473.70px;top:508.5px;font-size:13px;color:#006dcc;transform:scaleX(1.0815);transform-origin:0 0;">01-10000</div>
<div class="r" style="left:1299px;top:539px;width:592px;height:1px;background:#dddbda"></div>
<div id="t96" class="t " style="left:1570.60px;top:547.5px;font-size:13px;color:#006dcc;letter-spacing:0.443px;">View All</div>
<div class="r" style="left:1298px;top:588px;width:594px;height:171px;border:1px solid #dddbda;border-radius:4px"></div>
<svg class="r" style="left:1311px;top:597px" width="24" height="24" viewBox="0 0 14 14"><rect width="14" height="14" rx="1.5" fill="#4bc774"/>
<path d="M5.4 2.9h3.2l-0.6 1.1H6z M6 4.85h2C9.6 5.3 10.4 6.4 10.4 8V10.7c0 .25-.2 .45-.45 .45H4.05c-.25 0-.45-.2-.45-.45V8C3.6 6.4 4.4 5.3 6 4.85z" fill="#fff"/><text x="7" y="10.15" font-family="Liberation Sans" font-weight="700" font-size="5.8" fill="#4bc774" stroke="#4bc774" stroke-width="0.2" text-anchor="middle">$</text>
</svg>
<div id="t97" class="t " style="left:1346.60px;top:599.5px;font-size:14px;color:#080707;font-weight:700;letter-spacing:0.329px;">Order Items (1)</div>
<div class="dd" style="left:1859px;top:598px"></div>
<div id="t98" class="t lk" style="left:1310.70px;top:631.5px;font-size:14px;color:#006dcc;letter-spacing:0.553px;">Order Item 0000251</div>
<div class="dd" style="left:1859px;top:632px"></div>
<div id="t99" class="t " style="left:1310.70px;top:652.5px;font-size:13px;color:#3e3e3c;letter-spacing:0.073px;">Record Type:</div>
<div id="t100" class="t " style="left:1473.70px;top:652.5px;font-size:13px;color:#080707;letter-spacing:0.771px;">Donation</div>
<div id="t101" class="t " style="left:1310.70px;top:672.0px;font-size:13px;color:#3e3e3c;letter-spacing:0.150px;">Transaction Date:</div>
<div id="t102" class="t " style="left:1473.70px;top:672.0px;font-size:13px;color:#080707;transform:scaleX(1.0786);transform-origin:0 0;">5<span class="sl">/</span>7<span class="sl">/</span>2019</div>
<div id="t103" class="t " style="left:1310.70px;top:691.5px;font-size:13px;color:#3e3e3c;letter-spacing:0.309px;">Grand Total:</div>
<div id="t104" class="t " style="left:1473.70px;top:691.5px;font-size:13px;color:#080707;transform:scaleX(1.0957);transform-origin:0 0;">$100.00</div>
<div class="r" style="left:1299px;top:722px;width:592px;height:1px;background:#dddbda"></div>
<div id="t105" class="t " style="left:1570.60px;top:730.5px;font-size:13px;color:#006dcc;letter-spacing:0.443px;">View All</div>
<div class="r" style="left:1298px;top:771px;width:594px;height:171px;border:1px solid #dddbda;border-radius:4px"></div>
<svg class="r" style="left:1311px;top:780px" width="24" height="24" viewBox="0 0 14 14"><rect width="14" height="14" rx="1.5" fill="#e769b4"/>
<circle cx="7" cy="7.4" r="3.5" fill="none" stroke="#fff" stroke-width="1.15"/><path d="M7 5.7v1.9l0.9 1" stroke="#fff" stroke-width="0.8" fill="none"/><path d="M3.1 4.7Q3.2 3.1 4.8 2.9M10.9 4.7Q10.8 3.1 9.2 2.9" stroke="#fff" stroke-width="1.1" fill="none"/><path d="M4.7 10.2L3.9 11.2M9.3 10.2L10.1 11.2" stroke="#fff" stroke-width="1"/>
</svg>
<div id="t106" class="t " style="left:1346.60px;top:782.0px;font-size:14px;color:#080707;font-weight:700;letter-spacing:0.067px;">Schedules (1)</div>
<div class="dd" style="left:1859px;top:781px"></div>
<div id="t107" class="t lk" style="left:1310.70px;top:814.0px;font-size:14px;color:#006dcc;letter-spacing:0.547px;">Schedule 0000000</div>
<div class="dd" style="left:1859px;top:815px"></div>
<div class="r" style="left:1299px;top:846px;width:592px;height:1px;background:#dddbda"></div>
</body></html>
